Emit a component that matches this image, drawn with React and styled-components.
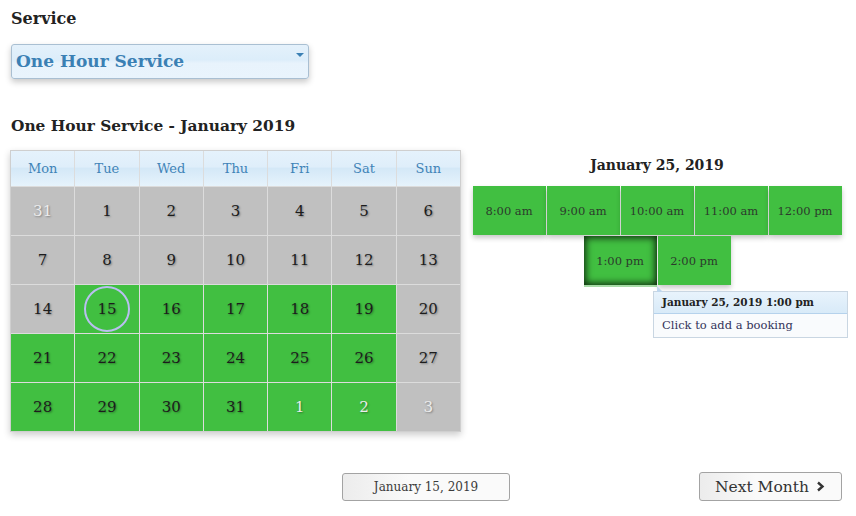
import styled, { createGlobalStyle, css } from "styled-components";

const GlobalStyle = createGlobalStyle`
  body {
    margin: 0;
    background: #fff;
    font-family: "DejaVu Serif", "Liberation Serif", serif;
    color: #222;
  }
`;

const Page = styled.div`
  width: 856px;
  height: 516px;
  box-sizing: border-box;
  padding: 8px 14px 0 10px;
  overflow: hidden;
`;

const Label = styled.div`
  font-size: 16px;
  font-weight: bold;
  padding-left: 1px;
  height: 22px;
  line-height: 22px;
`;

const Select = styled.div`
  position: relative;
  margin: 14px 0 0 1px;
  width: 298px;
  height: 35px;
  box-sizing: border-box;
  border: 1px solid #a9bfd2;
  border-radius: 3px;
  background: linear-gradient(#e4f1fb 0%, #dcedfa 45%, #e8f3fc 55%, #e9f4fd 100%);
  box-shadow: 0 3px 6px rgba(0, 0, 0, 0.22);
  color: #3b80b4;
  font-size: 17px;
  font-weight: bold;
  line-height: 33px;
  padding-left: 4px;
`;

const Caret = styled.span`
  position: absolute;
  right: 4px;
  top: 8px;
  width: 0;
  height: 0;
  border-left: 4px solid transparent;
  border-right: 4px solid transparent;
  border-top: 4px solid #3b80b4;
`;

const Heading = styled.div`
  margin-top: 36px;
  font-size: 15.4px;
  font-weight: bold;
  padding-left: 1px;
  height: 22px;
  line-height: 22px;
`;

const Main = styled.div`
  display: flex;
  align-items: flex-start;
  gap: 11px;
  margin-top: 13px;
`;

const Calendar = styled.div`
  display: grid;
  grid-template-columns: repeat(7, 1fr);
  grid-template-rows: 35px repeat(5, 48px);
  gap: 1px;
  width: 451px;
  box-sizing: border-box;
  background: #dcdcdc;
  border: 1px solid #cfcfcf;
  box-shadow: 0 3px 7px rgba(0, 0, 0, 0.2);
`;

const DayName = styled.div`
  display: flex;
  align-items: center;
  justify-content: center;
  background: linear-gradient(#e5f2fc 0%, #dfeefa 45%, #d4e8f7 50%, #e6f3fc 100%);
  color: #3f83b7;
  font-size: 13px;
`;

const Day = styled.div`
  position: relative;
  display: flex;
  align-items: center;
  justify-content: center;
  background: ${(p) => (p.$open ? "#41bf41" : "#c0c0c0")};
  color: ${(p) => (p.$other ? "#ececec" : "#1c1c1c")};
  font-size: 15px;
  text-shadow: 1px 1px 2px rgba(0, 0, 0, 0.35);
`;

const Today = styled.span`
  position: absolute;
  left: 50%;
  top: 50%;
  width: 42px;
  height: 42px;
  margin: -23px 0 0 -23px;
  border: 2px solid #b9bff0;
  border-radius: 50%;
`;

const Side = styled.div`
  position: relative;
  width: 370px;
`;

const DayTitle = styled.div`
  text-align: center;
  font-size: 14px;
  font-weight: bold;
  height: 36px;
  line-height: 30px;
`;

const Slots = styled.div`
  display: flex;
  flex-wrap: wrap;
  justify-content: center;
  gap: 1px;
`;

const Slot = styled.div`
  width: 73px;
  height: 49px;
  display: flex;
  align-items: center;
  justify-content: center;
  background: #41bf41;
  color: #2c3a2c;
  font-size: 11.5px;
  box-shadow: 0 3px 5px rgba(0, 0, 0, 0.22);
  ${(p) =>
    p.$active &&
    css`
      box-shadow: inset 0 0 7px 2px rgba(0, 0, 0, 0.75), 0 2px 0 #a8dca8;
    `}
`;

const Tip = styled.div`
  position: absolute;
  left: 181px;
  top: 141px;
  width: 195px;
  box-sizing: border-box;
  border: 1px solid #c9d6e2;
  background: #f9fbfd;

  &::before {
    content: "";
    position: absolute;
    left: 3px;
    top: -6px;
    border-left: 6px solid #bfd7ee;
    border-top: 6px solid transparent;
  }
`;

const TipHead = styled.div`
  height: 21px;
  line-height: 21px;
  padding-left: 8px;
  font-size: 10.5px;
  font-weight: bold;
  color: #222;
  background: linear-gradient(#e8f3fc, #d8eaf8);
  border-bottom: 1px solid #b5d2ec;
`;

const TipBody = styled.div`
  height: 23px;
  line-height: 22px;
  padding-left: 8px;
  font-size: 11.5px;
  color: #33335a;
`;

const Footer = styled.div`
  display: grid;
  grid-template-columns: 1fr auto 1fr;
  align-items: center;
  margin-top: 40px;
`;

const Button = styled.div`
  box-sizing: border-box;
  display: flex;
  align-items: center;
  justify-content: center;
  gap: 7px;
  white-space: nowrap;
  height: ${(p) => (p.$big ? "29px" : "28px")};
  padding: ${(p) => (p.$big ? "0 16px 0 15px" : "0")};
  width: ${(p) => (p.$big ? "auto" : "168px")};
  border: 1px solid #a3a3a3;
  border-radius: 3px;
  background: linear-gradient(90deg, #ececec, #fafafa 40%, #fafafa);
  color: ${(p) => (p.$big ? "#333" : "#3b3b3b")};
  font-size: ${(p) => (p.$big ? "15.5px" : "12px")};
  justify-self: ${(p) => p.$place};
`;

const days = [
  [31, 1, 2, 3, 4, 5, 6],
  [7, 8, 9, 10, 11, 12, 13],
  [14, 15, 16, 17, 18, 19, 20],
  [21, 22, 23, 24, 25, 26, 27],
  [28, 29, 30, 31, 1, 2, 3],
];

const isOpen = (r, c) => {
  if (c === 6) return false;
  if (r === 2) return c >= 1;
  return r >= 3;
};

const isOther = (r, c) => (r === 0 && c === 0) || (r === 4 && c >= 4);

const slots = ["8:00 am", "9:00 am", "10:00 am", "11:00 am", "12:00 pm", "1:00 pm", "2:00 pm"];

export default function App() {
  return (
    <Page>
      <GlobalStyle />
      <Label>Service</Label>
      <Select>
        One Hour Service
        <Caret />
      </Select>
      <Heading>One Hour Service - January 2019</Heading>
      <Main>
        <Calendar>
          {["Mon", "Tue", "Wed", "Thu", "Fri", "Sat", "Sun"].map((d) => (
            <DayName key={d}>{d}</DayName>
          ))}
          {days.map((row, r) =>
            row.map((n, c) => (
              <Day key={`${r}-${c}`} $open={isOpen(r, c)} $other={isOther(r, c)}>
                {r === 2 && c === 1 && <Today />}
                {n}
              </Day>
            ))
          )}
        </Calendar>
        <Side>
          <DayTitle>January 25, 2019</DayTitle>
          <Slots>
            {slots.map((s) => (
              <Slot key={s} $active={s === "1:00 pm"}>
                {s}
              </Slot>
            ))}
          </Slots>
          <Tip>
            <TipHead>January 25, 2019 1:00 pm</TipHead>
            <TipBody>Click to add a booking</TipBody>
          </Tip>
        </Side>
      </Main>
      <Footer>
        <span />
        <Button $place="center">January 15, 2019</Button>
        <Button $big $place="end">
          Next Month
          <svg width="9" height="11" viewBox="0 0 9 11">
            <path d="M2 1.5 L6.5 5.5 L2 9.5" fill="none" stroke="#333" strokeWidth="2.4" />
          </svg>
        </Button>
      </Footer>
    </Page>
  );
}
